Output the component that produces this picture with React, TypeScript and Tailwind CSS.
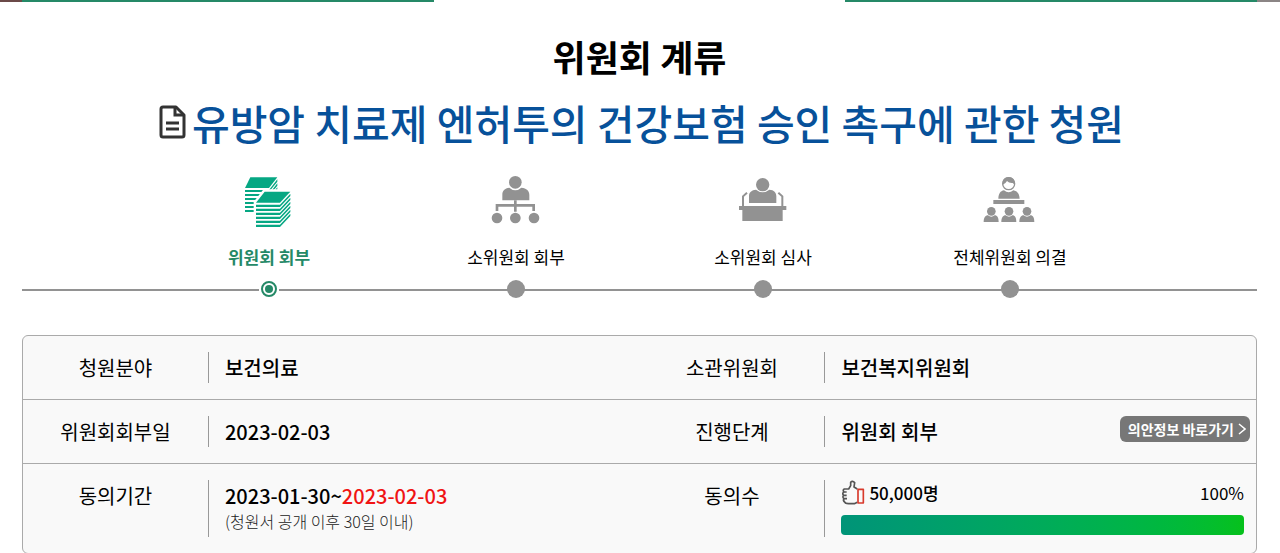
import type { ReactNode } from "react";

type Step = {
  label: string;
  active?: boolean;
  icon: ReactNode;
};

function BooksIcon() {
  return (
    <svg viewBox="80 30 168 168" className="h-14 w-14 text-[#06a783]" fill="currentColor" aria-hidden="true">
      <path d="M108 37H189L164 69H92Z" />
      {[75, 87, 99, 111, 123, 135].map((y) => (
        <path key={y} d={`M92 ${y}H164L189 ${y - 32}V${y - 25}L164 ${y + 6}H92Z`} />
      ))}
      <path d="M151 80H228V159L197 191H125V113Z" fill="white" stroke="white" strokeWidth="14" />
      <path d="M151 80H228L197 113H125Z" />
      {[119, 131, 143, 155, 167, 179].map((y) => (
        <path key={y} d={`M125 ${y}H197L228 ${y - 33}V${y - 26}L197 ${y + 7}H125Z`} />
      ))}
    </svg>
  );
}

function OrganizationIcon() {
  return (
    <svg viewBox="83 30 168 168" className="h-14 w-14 text-[#929292]" fill="currentColor" aria-hidden="true">
      <circle cx="165" cy="52" r="19" />
      <path d="M126 106V89C126 77 133 70 147 68Q165 84 183 68C199 70 207 77 207 90V106Z" />
      <path d="M110 138V121H220V138M165 106V140" fill="none" stroke="currentColor" strokeWidth="8" />
      <circle cx="110" cy="159" r="16" />
      <circle cx="165" cy="159" r="16" />
      <circle cx="221" cy="159" r="16" />
    </svg>
  );
}

function PodiumIcon() {
  return (
    <svg viewBox="89 30 168 168" className="h-14 w-14 text-[#929292]" fill="currentColor" aria-hidden="true">
      <circle cx="172" cy="59" r="20" />
      <path d="M131 114V93C131 82 139 75 152 74Q172 90 192 74C206 75 213 82 213 94V114Z" />
      <path d="M113 124V94L125 83M231 124V94L219 83" fill="none" stroke="currentColor" strokeWidth="6" />
      <path d="M101 123H243V135H232V168H111V135H101Z" />
    </svg>
  );
}

function AssemblyIcon() {
  return (
    <svg viewBox="95 30 168 168" className="h-14 w-14 text-[#929292]" fill="currentColor" aria-hidden="true">
      <circle cx="175" cy="56" r="18" fill="white" stroke="currentColor" strokeWidth="4" />
      <path d="M157 59C155 45 163 36 175 36S195 45 193 59L187 54Q176 55 170 48Q166 56 157 59Z" />
      <path d="M144 101C145 86 150 78 161 76Q175 88 189 76C202 79 207 87 208 101Z" />
      <path d="M129 105H222V117H129Z" />
      {[123, 176, 230].map((x) => (
        <g key={x}>
          <circle cx={x} cy="139" r="13" />
          <path d={`M${x - 23} 171C${x - 23} 158 ${x - 18} 151 ${x - 10} 151Q${x} 159 ${x + 10} 151C${x + 18} 151 ${x + 22} 158 ${x + 22} 171Z`} />
        </g>
      ))}
    </svg>
  );
}

function DocumentIcon() {
  return (
    <svg viewBox="0 0 27 34" className="h-[34px] w-[27px] shrink-0 text-[#333]" fill="none" stroke="currentColor" strokeWidth="3" aria-hidden="true">
      <path d="M4 2H17L25 10V30Q25 32 23 32H4Q2 32 2 30V4Q2 2 4 2Z" strokeLinejoin="round" />
      <path d="M16 2V10H25M7 18H20M7 24H20" />
    </svg>
  );
}

function ThumbIcon() {
  return (
    <svg viewBox="540 462 72 75" className="h-[25px] w-6 shrink-0" fill="none" strokeWidth="5" strokeLinejoin="round" aria-hidden="true">
      <path
        d="M589 489L579 483L581 470Q574 463 569 469V479L563 489H550Q544 492 549 498Q542 502 548 508Q543 513 549 518Q545 523 551 528Q553 533 562 533H580L589 529M548 498H557M547 508H557M549 518H558"
        stroke="#555"
      />
      <path d="M591 490H607V531H591Z" stroke="#d83a2c" />
    </svg>
  );
}

const STEPS: Step[] = [
  { label: "위원회 회부", active: true, icon: <BooksIcon /> },
  { label: "소위원회 회부", icon: <OrganizationIcon /> },
  { label: "소위원회 심사", icon: <PodiumIcon /> },
  { label: "전체위원회 의결", icon: <AssemblyIcon /> }
];

function HeaderCell({ children }: { children: ReactNode }) {
  return (
    <th scope="row" className="w-[15%] py-4 align-top font-normal">
      {children}
    </th>
  );
}

function DataCell({ children }: { children: ReactNode }) {
  return (
    <td className="h-px w-[35%] py-4 align-top font-medium">
      <div className="h-full border-l border-[#999] pl-4">{children}</div>
    </td>
  );
}

export default function App() {
  return (
    <div className="bg-white font-['Noto_Sans_CJK_KR','Noto_Sans',sans-serif] text-black">
      <div className="flex h-0.5">
        <div className="w-[22px] bg-[#6b4a48]" />
        <div className="flex-1 bg-[#258967]" />
        <div className="flex-1" />
        <div className="flex-1 bg-[#258967]" />
        <div className="w-[23px] bg-[#8b8585]" />
      </div>

      <main className="mr-[23px] ml-[22px] pt-[30px]">
        <h1 className="text-center text-[36px] leading-[48px] font-bold">위원회 계류</h1>
        <h2 className="mt-3 flex items-center justify-center gap-1.5 pl-1 text-[41px] leading-[60px] font-medium text-[#07519a]">
          <DocumentIcon />
          유방암 치료제 엔허투의 건강보험 승인 촉구에 관한 청원
        </h2>

        <div className="relative mt-[23px]">
          <div className="absolute inset-x-0 bottom-2 h-0.5 bg-[#929292]" />
          <ol className="relative grid grid-cols-4 px-[10%]">
            {STEPS.map((step) => (
              <li key={step.label} className="flex flex-col items-center" aria-current={step.active ? "step" : undefined}>
                {step.icon}
                <span className={`mt-3.5 text-[17px] leading-6 ${step.active ? "font-bold text-[#258967]" : "text-black"}`}>{step.label}</span>
                {step.active ? (
                  <span className="mt-2.5 flex h-5 w-5 items-center justify-center bg-white">
                    <span className="flex h-4 w-4 items-center justify-center rounded-full border-2 border-[#258967]">
                      <span className="h-2 w-2 rounded-full bg-[#258967]" />
                    </span>
                  </span>
                ) : (
                  <span className="mt-2.5 flex h-5 w-5 items-center justify-center">
                    <span className="h-[18px] w-[18px] rounded-full bg-[#929292]" />
                  </span>
                )}
              </li>
            ))}
          </ol>
        </div>

        <div className="mt-9 overflow-hidden rounded-md border border-[#aaa] bg-[#f9f9f9]">
          <table className="w-full table-fixed border-collapse text-[20px] leading-[31px]">
            <tbody>
              <tr className="border-b border-[#aaa]">
                <HeaderCell>청원분야</HeaderCell>
                <DataCell>보건의료</DataCell>
                <HeaderCell>소관위원회</HeaderCell>
                <DataCell>보건복지위원회</DataCell>
              </tr>
              <tr className="border-b border-[#aaa]">
                <HeaderCell>위원회회부일</HeaderCell>
                <DataCell>2023-02-03</DataCell>
                <HeaderCell>진행단계</HeaderCell>
                <DataCell>
                  <div className="flex items-start justify-between pr-1.5">
                    위원회 회부
                    <a href="#bill" className="flex h-[26px] items-center gap-1 rounded-md bg-[#777] pr-1 pl-2 text-[14px] leading-5 font-bold text-white">
                      의안정보 바로가기
                      <svg viewBox="0 0 8 12" className="h-3 w-2" fill="none" stroke="currentColor" strokeWidth="1.5" aria-hidden="true">
                        <path d="M1 1L7 6L1 11" />
                      </svg>
                    </a>
                  </div>
                </DataCell>
              </tr>
              <tr>
                <HeaderCell>동의기간</HeaderCell>
                <DataCell>
                  <p>
                    2023-01-30~<span className="text-[#f01414]">2023-02-03</span>
                  </p>
                  <p className="text-[16px] leading-5 font-light text-[#222]">(청원서 공개 이후 30일 이내)</p>
                </DataCell>
                <HeaderCell>동의수</HeaderCell>
                <DataCell>
                  <div className="pr-3 pb-0.5">
                    <div className="flex items-center gap-1 text-[17px] leading-6">
                      <ThumbIcon />
                      <span>50,000명</span>
                      <span className="ml-auto font-normal">100%</span>
                    </div>
                    <div
                      role="progressbar"
                      aria-label="동의수"
                      aria-valuenow={100}
                      className="mt-2.5 h-5 rounded bg-linear-to-r from-[#009478] to-[#06c11b]"
                    />
                  </div>
                </DataCell>
              </tr>
            </tbody>
          </table>
        </div>
      </main>
    </div>
  );
}
